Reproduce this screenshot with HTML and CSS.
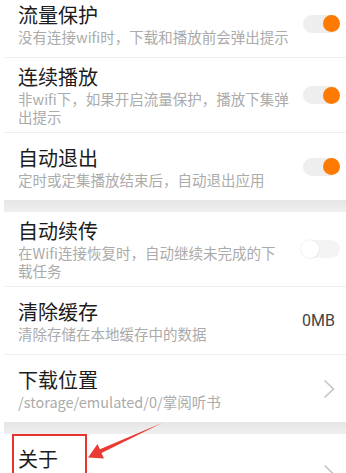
FILE: index.html
```html
<!DOCTYPE html>
<html lang="zh-CN">
  <head>
    <meta charset="UTF-8" />
    <meta name="viewport" content="width=device-width, initial-scale=1.0" />
    <title>设置</title>
    <link rel="stylesheet" href="styles.css">
  </head>

  <body>
    <div class="settings">
      <div class="group">
        <div class="item">
          <div class="text">
            <div class="title">流量保护</div>
            <div class="desc">没有连接wifi时，下载和播放前会弹出提示</div>
          </div>
          <span class="switch on"></span>
        </div>
        <div class="item">
          <div class="text">
            <div class="title">连续播放</div>
            <div class="desc">非wifi下，如果开启流量保护，播放下集弹出提示</div>
          </div>
          <span class="switch on"></span>
        </div>
        <div class="item">
          <div class="text">
            <div class="title">自动退出</div>
            <div class="desc">定时或定集播放结束后，自动退出应用</div>
          </div>
          <span class="switch on"></span>
        </div>
      </div>

      <div class="gap"></div>

      <div class="group">
        <div class="item">
          <div class="text">
            <div class="title">自动续传</div>
            <div class="desc">在Wifi连接恢复时，自动继续未完成的下<br />载任务</div>
          </div>
          <span class="switch"></span>
        </div>
        <div class="item">
          <div class="text">
            <div class="title">清除缓存</div>
            <div class="desc">清除存储在本地缓存中的数据</div>
          </div>
          <span class="value">0MB</span>
        </div>
        <div class="item">
          <div class="text">
            <div class="title">下载位置</div>
            <div class="desc">/storage/emulated/0/掌阅听书</div>
          </div>
          <svg class="arrow" width="12" height="20" viewBox="0 0 12 20">
            <path d="M1.5 1.5 L10.5 10 L1.5 18.5" fill="none" stroke="#c4c4c4" stroke-width="1.6" />
          </svg>
        </div>
      </div>

      <div class="gap"></div>

      <div class="group">
        <div class="item item-top">
          <div class="text">
            <div class="title">关于</div>
          </div>
          <svg class="arrow" width="12" height="20" viewBox="0 0 12 20">
            <path d="M1.5 1.5 L10.5 10 L1.5 18.5" fill="none" stroke="#c4c4c4" stroke-width="1.6" />
          </svg>
          <div class="mark"></div>
        </div>
      </div>
    </div>

    <svg class="pointer" width="346" height="473" viewBox="0 0 346 473">
      <polygon points="162,423 101.5,452.9 104,458.5 88,457.5 97.5,444 99.9,449.3" fill="#ea3a34" />
    </svg>
  </body>
</html>
```

FILE: styles.css
```css
body {
    margin: 0;
    padding: 0;
    background-color: #ffffff;
    font-family: "Noto Sans CJK SC", "Noto Sans", sans-serif;
    overflow: hidden;
}

.settings {
    margin-top: -10px;
    margin-left: 4px;
}

.item {
    display: flex;
    align-items: center;
    min-height: 55px;
    padding: 6px 6px 6px 14px;
    position: relative;
}

.group .item + .item {
    border-top: 1px solid #efefef;
}

.text {
    flex: 1;
    margin-right: 11px;
}

.title {
    font-size: 20px;
    line-height: 26px;
    color: #1c1c1c;
}

.desc {
    font-size: 14.5px;
    line-height: 18px;
    color: #ababab;
}

.item-top {
    align-items: flex-start;
}

.item-top .text {
    margin-top: 5.5px;
}

.item-top .arrow {
    margin-top: 23.5px;
}

.switch {
    width: 37px;
    height: 18px;
    border-radius: 9px;
    background-color: #eeeeee;
    position: relative;
}

.switch::after {
    content: "";
    position: absolute;
    top: 0;
    left: 0;
    width: 18px;
    height: 18px;
    border-radius: 50%;
    background-color: #ffffff;
    box-shadow: 0 0 2px rgba(0, 0, 0, 0.12);
}

.switch.on::after {
    top: 0.5px;
    left: 20px;
    width: 17px;
    height: 17px;
    background-color: #ff7a00;
    box-shadow: none;
}

.switch:not(.on) {
    width: 39px;
    background-color: #f4f4f4;
}

.value {
    font-family: Roboto, "Noto Sans", sans-serif;
    font-size: 16px;
    color: #444444;
    margin-right: 5px;
}

.arrow {
    margin-right: 5px;
}

.gap {
    height: 12px;
    background: linear-gradient(#e6e6e6, #efefef);
}

.mark {
    position: absolute;
    left: 8px;
    top: 0;
    width: 71px;
    height: 60px;
    border: 2.5px solid #e8332f;
}

.pointer {
    position: absolute;
    left: 0;
    top: 0;
}
```
